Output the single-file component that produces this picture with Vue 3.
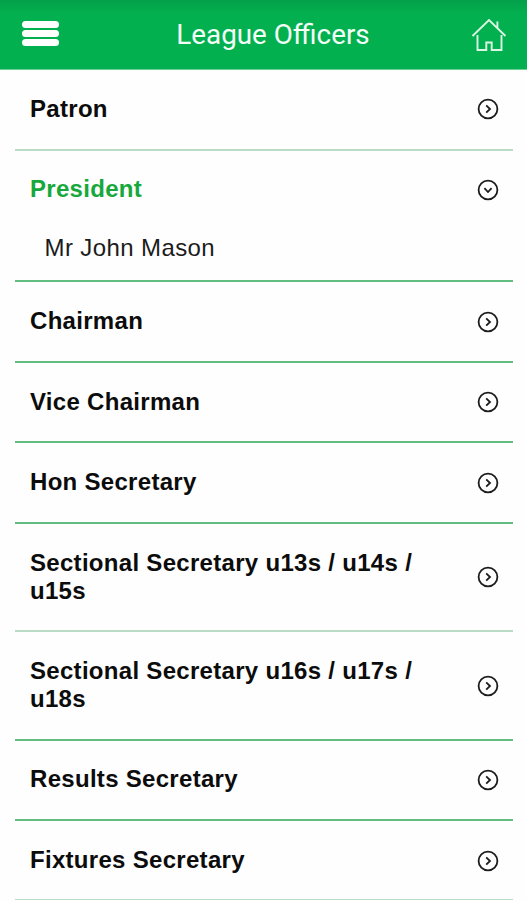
<template>
  <div class="page">
    <header class="top-bar">
      <button class="icon-btn menu-btn" aria-label="Menu">
        <span class="menu-line"></span>
        <span class="menu-line"></span>
        <span class="menu-line"></span>
      </button>
      <h1 class="title">League Officers</h1>
      <button class="icon-btn home-btn" aria-label="Home">
        <svg width="36" height="34" viewBox="0 0 36 34">
          <path d="M1.500 18 18 2l16.500 16M26.400 3.500v6.500M6.500 17v15h8.800v-7.500h5.400V32h9.800V17" />
        </svg>
      </button>
    </header>

    <!-- accordion -->
    <main class="list">
      <section
        v-for="(item, index) in officers"
        :key="item.role"
        class="item"
        :class="{ 'item--open': openIndex === index, 'item--soft': item.soft }"
      >
        <button class="item-head" @click="toggle(index)">
          <span class="item-role">{{ item.role }}</span>
          <svg class="item-icon" width="22" height="22" viewBox="0 0 22 22">
            <circle cx="11" cy="11" r="9.400" />
            <path d="M9.200 7.400 13 11l-3.800 3.600" />
          </svg>
        </button>
        <div v-if="openIndex === index" class="item-body">{{ item.name }}</div>
      </section>
    </main>
  </div>
</template>

<script setup>
import { ref } from 'vue'

const officers = [
  { role: 'Patron', soft: true },
  { role: 'President', name: 'Mr John Mason' },
  { role: 'Chairman' },
  { role: 'Vice Chairman' },
  { role: 'Hon Secretary' },
  { role: 'Sectional Secretary u13s / u14s / u15s', soft: true },
  { role: 'Sectional Secretary u16s / u17s / u18s' },
  { role: 'Results Secretary' },
  { role: 'Fixtures Secretary', soft: true },
]

const openIndex = ref(1)

const toggle = (index) => {
  openIndex.value = openIndex.value === index ? -1 : index
}
</script>

<style>
body {
  background: #ffffff;
  overflow: hidden;
}
</style>

<style scoped>
.page {
  height: 900px;
  overflow: hidden;
  background: #fefefe;
  font-family: "Liberation Sans", Arial, sans-serif;
}

button {
  padding: 0;
  border: none;
  background: none;
  font: inherit;
  color: inherit;
}

.top-bar {
  box-sizing: border-box;
  height: 70px;
  padding: 0 20px 0 22px;
  display: flex;
  align-items: center;
  justify-content: space-between;
  background: linear-gradient(#03a04a 0, #03b04f 14px, #03b04f 100%);
  border-bottom: 1px solid #6dce95;
}

.menu-btn {
  display: flex;
  flex-direction: column;
  gap: 2px;
  margin-top: -3px;
}

.menu-line {
  width: 37px;
  height: 7px;
  border-radius: 3.5px;
  background: #ffffff;
}

.title {
  margin: 0;
  padding-left: 16px;
  font-family: Roboto, sans-serif;
  font-size: 27.8px;
  font-weight: 400;
  line-height: 32px;
  color: #f4fff8;
}

.home-btn svg {
  display: block;
  fill: none;
  stroke: #d9f7e4;
  stroke-width: 1.9;
}

.list {
  padding: 0 14px 0 15px;
}

.item {
  border-bottom: 2px solid #63bd80;
}

.item--soft {
  border-bottom-color: #b9dcc6;
}

.item-head {
  box-sizing: border-box;
  width: 100%;
  padding: 24.9px 14px 24.6px 15px;
  display: flex;
  align-items: center;
  justify-content: space-between;
  text-align: left;
}

.item:last-child .item-head {
  padding-bottom: 23.4px;
}

.item-role {
  width: 400px;
  padding-bottom: 1.4px;
  font-size: 24px;
  font-weight: 700;
  line-height: 27.7px;
  letter-spacing: 0.3px;
  color: #0c0c0c;
}

.item-icon {
  fill: none;
  stroke: #1c1c1c;
  stroke-width: 1.8;
}

.item--open .item-role {
  color: #17a83c;
}

.item--open .item-icon {
  transform: rotate(90deg);
}

.item-body {
  padding: 5px 29.5px 18.1px;
  font-size: 24px;
  line-height: 28px;
  letter-spacing: 0.4px;
  color: #1c1c1c;
}
</style>
